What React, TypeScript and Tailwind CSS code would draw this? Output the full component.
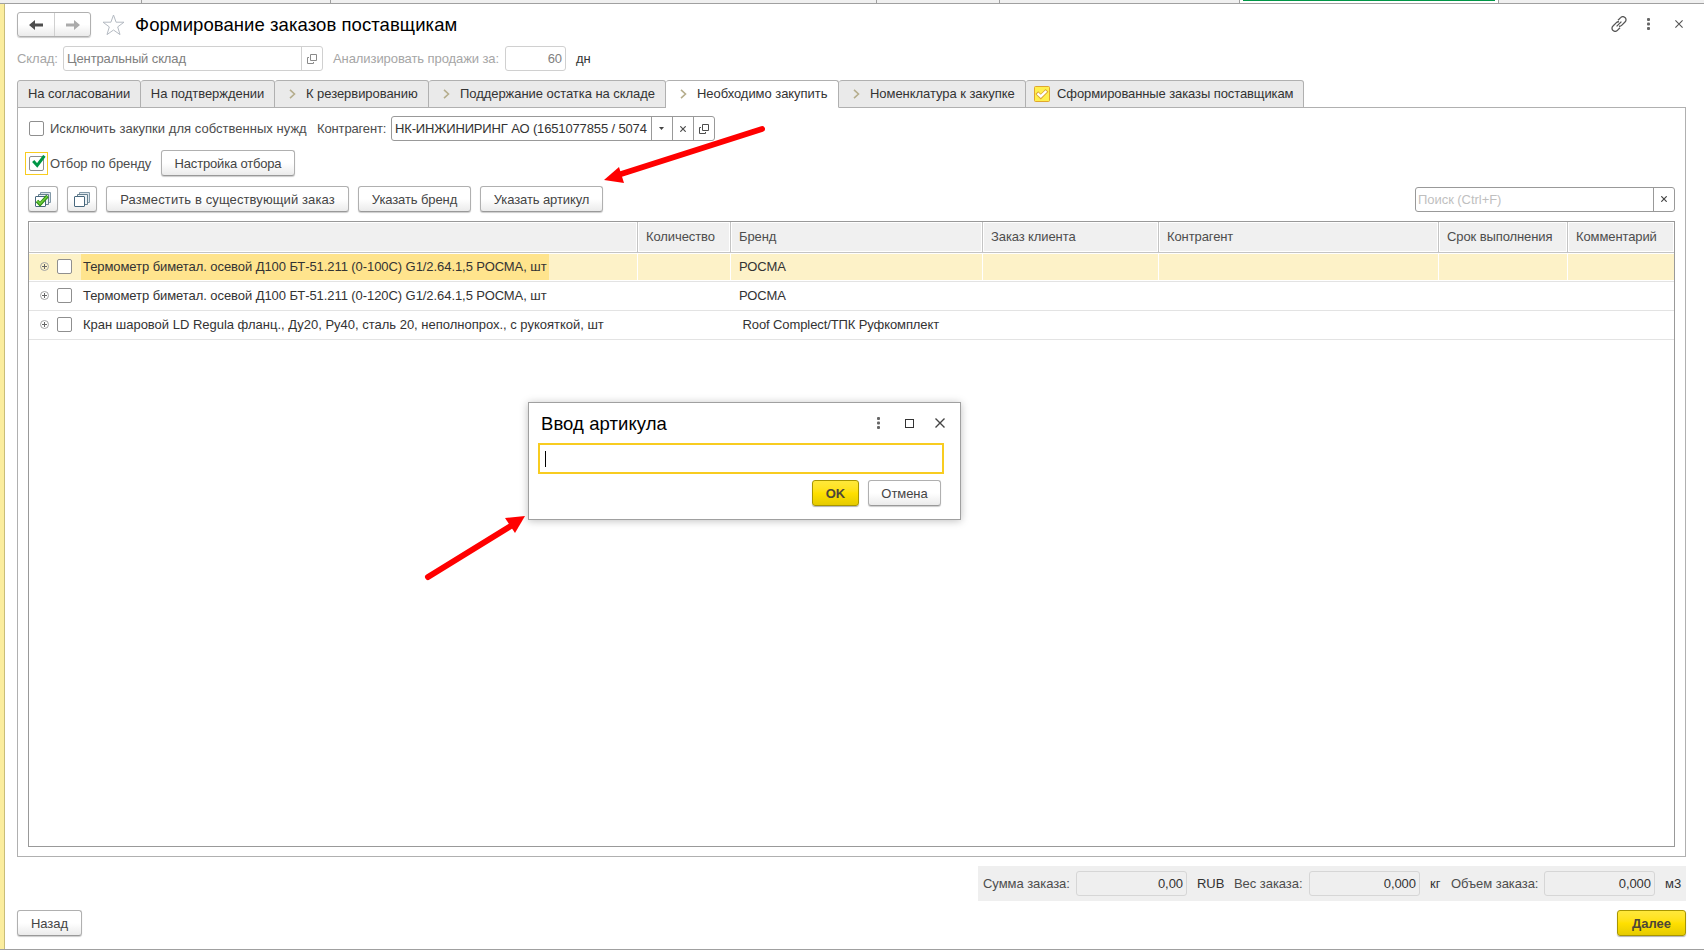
import React from 'react';
import clsx from 'clsx';

interface TabItem {
  label: string;
  width: string;
  icon?: 'arrow' | 'done';
  active?: boolean;
}

interface Row {
  name: string;
  brand: string;
  tracking: string;
  selected?: boolean;
}

const tabs: TabItem[] = [
  { label: 'На согласовании', width: 'w-[124px]' },
  { label: 'На подтверждении', width: 'w-[134px]' },
  { label: 'К резервированию', width: 'w-[154px]', icon: 'arrow' },
  { label: 'Поддержание остатка на складе', width: 'w-[237px]', icon: 'arrow' },
  { label: 'Необходимо закупить', width: 'w-[173px]', icon: 'arrow', active: true },
  { label: 'Номенклатура к закупке', width: 'w-[187px]', icon: 'arrow' },
  { label: 'Сформированные заказы поставщикам', width: 'w-[278px] tracking-[-0.1px]', icon: 'done' },
];

const columns = ['', 'Количество', 'Бренд', 'Заказ клиента', 'Контрагент', 'Срок выполнения', 'Комментарий'];

const rows: Row[] = [
  {
    name: 'Термометр биметал. осевой Д100 БТ-51.211 (0-100С) G1/2.64.1,5 РОСМА, шт',
    brand: 'РОСМА',
    tracking: 'tracking-[-0.07px]',
    selected: true,
  },
  {
    name: 'Термометр биметал. осевой Д100 БТ-51.211 (0-120С) G1/2.64.1,5 РОСМА, шт',
    brand: 'РОСМА',
    tracking: 'tracking-[-0.07px]',
  },
  {
    name: 'Кран шаровой LD Regula фланц., Ду20, Ру40, сталь 20, неполнопрох., с рукояткой, шт',
    brand: '\u00a0Roof Complect/ТПК Руфкомплект',
    tracking: 'tracking-[-0.01px]',
  },
];

const gridCols = 'grid grid-cols-[609px_93px_252px_176px_280px_129px_106px]';

const OpenIcon = ({ className }: { className?: string }) => (
  <svg width="10" height="10" viewBox="0 0 10 10" fill="none" stroke="currentColor" className={className}>
    <path d="M3.5 .5h6v6h-6zM2 3.5H.5v6h6V8" />
  </svg>
);

const CrossIcon = ({ size = 6 }: { size?: number }) => (
  <svg width={size} height={size} viewBox="0 0 10 10" stroke="currentColor" strokeWidth={size > 6 ? 1.4 : 2}>
    <path d="M.5 .5L9.5 9.5M9.5 .5L.5 9.5" />
  </svg>
);

const DotsIcon = () => (
  <svg width="3" height="12" viewBox="0 0 3 12" fill="#666">
    <rect width="3" height="3" rx="1" />
    <rect y="4.5" width="3" height="3" rx="1" />
    <rect y="9" width="3" height="3" rx="1" />
  </svg>
);

const ChevronIcon = () => (
  <svg width="7" height="10" viewBox="0 0 7 10" fill="none" stroke="#b5ad8c" strokeWidth="1.6">
    <path d="M1 .8L5.5 5L1 9.2" />
  </svg>
);

const DoneIcon = () => (
  <svg width="16" height="16" viewBox="0 0 16 16" fill="none">
    <rect x=".5" y=".5" width="15" height="15" rx="1" fill="#fff04d" stroke="#dfa62f" />
    <path d="M2.8 6.6L6.8 10.6L13 4.4" stroke="#dba535" strokeWidth="4" />
    <path d="M3.5 7.3L6.8 10.4L12.3 5" stroke="#fff" strokeWidth="2.4" />
  </svg>
);

const CopiesIcon = ({ checked }: { checked?: boolean }) => (
  <svg width="16" height="16" viewBox="0 0 16 16" fill="none" stroke="#47677d">
    <path d="M5.5 3V.5h10v10H13" fill="#dce5eb" stroke="#8299a8" />
    <path d="M3.5 5V2.5h10v10H11" fill="#edf2f5" stroke="#66808f" />
    <rect x=".5" y="4.5" width="10" height="10" rx=".5" fill="#fff" />
    {checked && <path d="M2 9L5 12.2L12.5 4" stroke="#2c8f12" strokeWidth="3.4" />}
    {checked && <path d="M2.2 9L5 11.9L12.3 4.2" stroke="#6ccb3d" strokeWidth="1.6" />}
  </svg>
);

const Checkbox = () => <span className="block h-[15px] w-[15px] shrink-0 rounded-[2px] border border-[#8f8f8f] bg-white" />;

const Button: React.FC<{ className?: string; primary?: boolean; children: React.ReactNode }> = ({
  className,
  primary,
  children,
}) => (
  <button
    className={clsx(
      'flex h-[26px] shrink-0 items-center justify-center rounded-[3px] border pt-px whitespace-nowrap',
      primary
        ? 'border-[#a89600] bg-linear-to-b from-[#ffe83a] via-[#ffe000] to-[#e6cb00] font-bold text-[#4d4638] shadow-[0_1px_1px_rgba(0,0,0,0.3)]'
        : 'border-[#b0b0b0] border-b-[#999] bg-linear-to-b from-white from-50% to-[#ebebeb] text-[#444] shadow-[0_1px_1px_rgba(0,0,0,0.2)]',
      className
    )}
  >
    {children}
  </button>
);

interface TotalProps {
  label: string;
  value: string;
  unit: string;
  labelWidth: string;
  unitWidth: string;
}

const Total: React.FC<TotalProps> = ({ label, value, unit, labelWidth, unitWidth }) => (
  <div className="flex shrink-0 items-center">
    <span className={clsx('whitespace-nowrap', labelWidth)}>{label}</span>
    <span className="flex h-[25px] w-[111px] items-center justify-end rounded-[3px] border border-[#d6d6d6] pr-[3px] text-[#333]">
      {value}
    </span>
    <span className={clsx('ml-[10px] text-[#333]', unitWidth)}>{unit}</span>
  </div>
);

const WindowStrip = () => (
  <div className="flex h-[4px] shrink-0 border-b border-[#a0a0a0] bg-[#f0f0f0]">
    <div className="w-[142px] border-r border-[#a0a0a0]" />
    <div className="w-[189px] border-r border-[#a0a0a0]" />
    <div className="w-[546px] border-r border-[#a0a0a0]" />
    <div className="w-[123px] border-r border-[#a0a0a0]" />
    <div className="w-[240px] border-r border-[#a0a0a0]" />
    <div className="w-[259px] border-r border-[#a0a0a0] bg-white px-[3px]">
      <div className="h-px bg-[#009646]" />
    </div>
  </div>
);

const Header = () => (
  <header className="flex h-[41px] items-center">
    <div className="flex h-[25px] w-[74px] rounded-[3px] border border-[#b0b0b0] bg-linear-to-b from-white from-50% to-[#ebebeb] shadow-[0_1px_1px_rgba(0,0,0,0.2)]">
      <div className="flex w-[37px] items-center justify-center border-r border-[#d0d0d0]">
        <svg width="14" height="10" viewBox="0 0 14 10" fill="#4d4d4d">
          <path d="M0 5L6 0V3.6H14V6.4H6V10z" />
        </svg>
      </div>
      <div className="flex w-[35px] items-center justify-center">
        <svg width="14" height="10" viewBox="0 0 14 10" fill="#ababab">
          <path d="M14 5L8 0V3.6H0V6.4H8V10z" />
        </svg>
      </div>
    </div>
    <svg className="ml-[11px]" width="23" height="22" viewBox="0 0 23 22" fill="none" stroke="#b4bac2">
      <path d="M11.5 1L14.1 8.2H22L15.7 12.9L18 20.6L11.5 16L5 20.6L7.3 12.9L1 8.2H8.9z" />
    </svg>
    <h1 className="ml-[10px] text-[18.5px] tracking-[0.07px] text-black">Формирование заказов поставщикам</h1>
    <div className="-mt-[2px] ml-auto flex items-center pr-[3px] text-[#555]">
      <svg width="16" height="16" viewBox="0 0 16 16" fill="none" stroke="currentColor" strokeWidth="1.3">
        <path d="M7 4.2L9.6 1.6a2.9 2.9 0 0 1 4.4 0a2.9 2.9 0 0 1 0 4.4L10.6 9.4a2.9 2.9 0 0 1-2.6 .8" />
        <path d="M9 11.8L6.4 14.4a2.9 2.9 0 0 1-4.4 0a2.9 2.9 0 0 1 0-4.4L5.4 6.6a2.9 2.9 0 0 1 2.6-.8" />
        <path d="M5.6 10.4L10.4 5.6" />
      </svg>
      <span className="ml-[20px]">
        <DotsIcon />
      </span>
      <span className="ml-[25px]">
        <CrossIcon size={8} />
      </span>
    </div>
  </header>
);

const Filters = () => (
  <div className="mt-px flex h-[25px] items-center text-[#a6a6a6]">
    <span className="w-[46px]">Склад:</span>
    <div className="flex h-[25px] w-[260px] rounded-[3px] border border-[#d0d0d0]">
      <span className="flex w-[238px] items-center border-r border-[#d0d0d0] pl-[3px] tracking-[-0.12px] text-[#808080]">
        Центральный склад
      </span>
      <span className="flex flex-1 items-center justify-center text-[#8a8a8a]">
        <OpenIcon />
      </span>
    </div>
    <span className="ml-[10px] w-[172px] tracking-[-0.08px] whitespace-nowrap">Анализировать продажи за:</span>
    <span className="flex h-[25px] w-[61px] items-center justify-end rounded-[3px] border border-[#d0d0d0] pr-[3px] text-[#808080]">60</span>
    <span className="ml-[10px] text-[#333]">дн</span>
  </div>
);

const Tabs = () => (
  <div className="relative z-10 mt-[9px] -mb-px flex h-[28px]">
    {tabs.map((tab, i) => (
      <div
        key={tab.label}
        className={clsx(
          'flex shrink-0 items-center rounded-t-[3px] border-t border-r border-b border-[#b0b0b0] whitespace-nowrap text-[#333]',
          tab.width,
          i === 0 && 'border-l',
          tab.active ? 'border-b-white bg-white' : 'bg-[#eaeaea]',
          !tab.icon && 'justify-center',
          tab.icon === 'arrow' && 'pl-[14px]',
          tab.icon === 'done' && 'pl-[8px]'
        )}
      >
        {tab.icon === 'arrow' && (
          <span className="mr-[10px]">
            <ChevronIcon />
          </span>
        )}
        {tab.icon === 'done' && (
          <span className="mr-[7px]">
            <DoneIcon />
          </span>
        )}
        {tab.label}
      </div>
    ))}
  </div>
);

const ItemsTable = () => (
  <div className="mt-[9px] h-[626px] border border-[#999] bg-white">
    <div className={clsx(gridCols, 'h-[31px] border-b border-[#c4c4c4] tracking-[-0.1px] text-[#4d4d4d]')}>
      {columns.map((col, i) => (
        <div key={i} className={clsx('flex', i < 6 && 'border-r border-[#c4c4c4]')}>
          <div className="flex flex-1 items-center border border-white bg-[#f0f0f0] pb-px pl-[7px] whitespace-nowrap">{col}</div>
        </div>
      ))}
    </div>
    {rows.map((row) => (
      <div key={row.name} className="h-[29px] border-b border-[#e3e3e3] py-px text-[#333]">
        <div className={clsx(gridCols, 'h-[26px]', row.selected && 'bg-[#fdf2c8]')}>
          <div className={clsx('flex items-center pl-[11px]', row.selected && 'border-r border-white')}>
            <svg className="-mt-px" width="9" height="9" viewBox="0 0 9 9" fill="none" stroke="#a3a3a3">
              <circle cx="4.5" cy="4.5" r="4" />
              <path d="M4.5 2v5M2 4.5h5" stroke="#666" />
            </svg>
            <span className="-mt-px ml-[8px]">
              <Checkbox />
            </span>
            <span
              className={clsx(
                'ml-[9px] flex h-[26px] items-center px-[2px] whitespace-nowrap',
                row.tracking,
                row.selected && 'bg-[#ffe48d]'
              )}
            >
              {row.name}
            </span>
          </div>
          <div className={clsx(row.selected && 'border-r border-white')} />
          <div
            className={clsx(
              'flex items-center pl-[8px] tracking-[-0.1px] whitespace-nowrap',
              row.selected && 'border-r border-white'
            )}
          >
            {row.brand}
          </div>
          <div className={clsx(row.selected && 'border-r border-white')} />
          <div className={clsx(row.selected && 'border-r border-white')} />
          <div className={clsx(row.selected && 'border-r border-white')} />
        </div>
      </div>
    ))}
  </div>
);

const Panel = () => (
  <section className="h-[750px] border border-[#b0b0b0] px-[10px] pt-[8px]">
    <div className="flex h-[25px] items-center text-[#4d4d4d]">
      <span className="ml-px">
        <Checkbox />
      </span>
      <span className="ml-[6px] w-[267px] tracking-[0.03px] whitespace-nowrap">Исключить закупки для собственных нужд</span>
      <span className="w-[74px] tracking-[-0.14px]">Контрагент:</span>
      <div className="flex h-[25px] w-[324px] rounded-[3px] border border-[#999]">
        <div className="flex w-[259px] items-center pl-[3px] text-[#333]">
          <span className="w-[253px] tracking-[-0.14px] whitespace-nowrap">НК-ИНЖИНИРИНГ АО (1651077855 / 5074</span>
        </div>
        <span className="flex w-[21px] items-center justify-center border-l border-[#999] pr-px">
          <svg width="5" height="3" viewBox="0 0 5 3" fill="#444">
            <path d="M0 0h5L2.5 3z" />
          </svg>
        </span>
        <span className="flex w-[21px] items-center justify-center border-l border-[#999] pr-px">
          <CrossIcon />
        </span>
        <span className="flex w-[21px] items-center justify-center border-l border-[#999]">
          <OpenIcon />
        </span>
      </div>
    </div>

    <div className="mt-[9px] flex h-[26px] items-center text-[#4d4d4d]">
      <span className="mt-px -ml-[3px] flex h-[23px] w-[23px] items-center justify-center border border-[#f8cc20]">
        <span className="relative">
          <Checkbox />
          <svg className="absolute -top-px left-[3px]" width="14" height="14" viewBox="0 0 14 14" fill="none" stroke="#009646" strokeWidth="3">
            <path d="M1.2 6L5.2 10.4L12.4 .8" />
          </svg>
        </span>
      </span>
      <span className="ml-[2px] w-[111px] pt-px tracking-[-0.1px]">Отбор по бренду</span>
      <Button className="w-[134px] tracking-[-0.18px]">Настройка отбора</Button>
    </div>

    <div className="mt-[10px] flex h-[26px] items-center">
      <Button className="w-[30px]">
        <CopiesIcon checked />
      </Button>
      <Button className="ml-[9px] w-[30px]">
        <CopiesIcon />
      </Button>
      <Button className="ml-[9px] w-[243px] tracking-[0.11px]">Разместить в существующий заказ</Button>
      <Button className="ml-[9px] w-[113px] tracking-[-0.1px]">Указать бренд</Button>
      <Button className="ml-[9px] w-[123px] tracking-[-0.1px]">Указать артикул</Button>
      <div className="mt-px ml-auto flex h-[25px] w-[260px] rounded-[3px] border border-[#999]">
        <span className="flex w-[237px] items-center pl-[2px] text-[#bfbfbf]">Поиск (Ctrl+F)</span>
        <span className="flex flex-1 items-center justify-center border-l border-[#999] pr-px pb-px text-[#444]">
          <CrossIcon />
        </span>
      </div>
    </div>

    <ItemsTable />
  </section>
);

const ArticleDialog = () => (
  <div className="absolute top-[402px] left-[528px] h-[118px] w-[433px] border border-[#a0a0a0] bg-white shadow-[0_1px_8px_rgba(0,0,0,0.25)]">
    <div className="flex h-[40px] items-center pl-[12px]">
      <h2 className="pt-px text-[18.5px] tracking-[0.07px] text-black">Ввод артикула</h2>
      <div className="ml-auto flex items-center pr-[15px] text-[#444]">
        <DotsIcon />
        <span className="ml-[25px] block h-[9px] w-[9px] border border-[#333]" />
        <span className="ml-[21px]">
          <CrossIcon size={10} />
        </span>
      </div>
    </div>
    <div className="ml-[9px] flex h-[31px] w-[406px] items-center border-2 border-[#f8cc20] pl-[5px]">
      <span className="h-[16px] w-px bg-black" />
    </div>
    <div className="mt-[6px] flex justify-end gap-[9px] pr-[19px]">
      <Button primary className="w-[47px]">
        OK
      </Button>
      <Button className="w-[73px]">Отмена</Button>
    </div>
  </div>
);

// hand-drawn pointers over the form
const Pointers = () => (
  <svg className="pointer-events-none absolute inset-0" width="1704" height="950" fill="#f00" stroke="#f00">
    <path d="M762 129L618 175" strokeWidth="6" strokeLinecap="round" />
    <path d="M604 180L619 167L624 183z" stroke="none" />
    <path d="M428 577L514 524" strokeWidth="6" strokeLinecap="round" />
    <path d="M525 516L515 533L505 518z" stroke="none" />
  </svg>
);

export default function App() {
  return (
    <div className="relative flex h-[950px] w-[1704px] flex-col overflow-hidden border-b border-[#a0a0a0] bg-white font-['Liberation_Sans',Arial,sans-serif] text-[13px] leading-[16px] tracking-[-0.05px]">
      <WindowStrip />
      <div className="flex flex-1">
        <div className="w-[5px] shrink-0 border-r border-[#c9bd78] bg-[#fbed9e]" />
        <main className="flex w-[1681px] flex-col pl-[12px]">
          <Header />
          <Filters />
          <Tabs />
          <Panel />
          <div className="mt-[9px] ml-auto flex h-[35px] w-[708px] items-center bg-[#efefef] pl-[5px] text-[#4d4d4d]">
            <Total label="Сумма заказа:" value="0,00" unit="RUB" labelWidth="w-[93px]" unitWidth="w-[37px]" />
            <Total label="Вес заказа:" value="0,000" unit="кг" labelWidth="w-[75px]" unitWidth="w-[21px]" />
            <Total label="Объем заказа:" value="0,000" unit="м3" labelWidth="w-[93px]" unitWidth="w-[20px]" />
          </div>
          <div className="mt-[9px] flex justify-between">
            <Button className="w-[65px]">Назад</Button>
            <Button primary className="w-[69px]">
              Далее
            </Button>
          </div>
        </main>
      </div>
      <ArticleDialog />
      <Pointers />
    </div>
  );
}
